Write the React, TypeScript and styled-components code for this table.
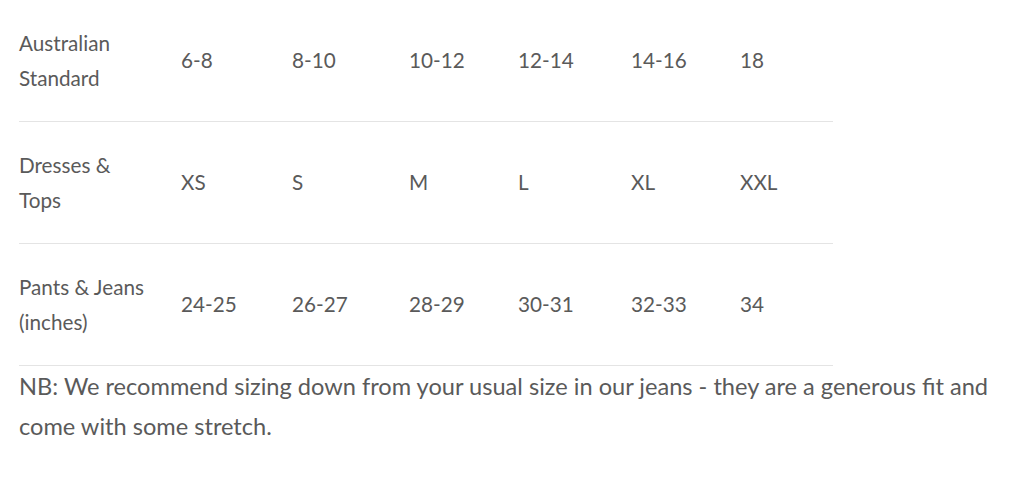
import React from 'react';
import styled, { createGlobalStyle } from 'styled-components';

const GlobalStyle = createGlobalStyle`
  body {
    margin: 0;
    background: #ffffff;
    font-family: Lato, "Open Sans", sans-serif;
    color: #5a5a5a;
  }
`;

const rows = [
  { label: ['Australian', 'Standard'], values: ['6-8', '8-10', '10-12', '12-14', '14-16', '18'] },
  { label: ['Dresses &', 'Tops'], values: ['XS', 'S', 'M', 'L', 'XL', 'XXL'] },
  { label: ['Pants & Jeans', '(inches)'], values: ['24-25', '26-27', '28-29', '30-31', '32-33', '34'] },
];

const App: React.FC = () => {
  return (
    <>
      <GlobalStyle />
      <Wrapper>
        <SizeTable>
          {rows.map((row) => (
            <Row key={row.label.join(' ')}>
              <LabelCell>
                {row.label[0]}
                <br />
                {row.label[1]}
              </LabelCell>
              {row.values.map((v, i) => (
                <ValueCell key={i}>{v}</ValueCell>
              ))}
            </Row>
          ))}
        </SizeTable>
        <Note>
          NB: We recommend sizing down from your usual size in our jeans - they are a generous fit and
          come with some stretch.
        </Note>
      </Wrapper>
    </>
  );
};

const Wrapper = styled.div`
  padding: 0 19px;
`;

const SizeTable = styled.div`
  width: 814px;
`;

const Row = styled.div`
  display: grid;
  grid-template-columns: 162px 111px 117px 109px 113px 109px 93px;
  align-items: center;
  padding: 26px 0 25px;
  border-bottom: 1px solid #e4e4e4;
  font-size: 20.7px;
  line-height: 35px;
`;

const LabelCell = styled.div`
  white-space: nowrap;
`;

const ValueCell = styled.div`
  white-space: nowrap;
  margin-top: -2px;
`;

const Note = styled.p`
  margin: 0;
  font-size: 23.6px;
  line-height: 40px;
`;

export default App;
